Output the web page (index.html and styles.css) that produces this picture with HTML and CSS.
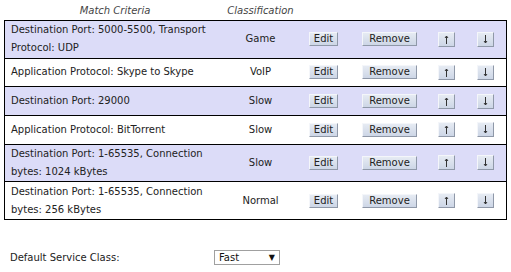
FILE: index.html
```html
<!DOCTYPE html>
<html>
    <head>
        <title>QoS Rules</title>
        <link rel="stylesheet" href="styles.css">
    </head>
    <body>
        <!-- Classification rules -->
        <table class="rules">
            <colgroup>
                <col class="colCriteria">
                <col class="colClass">
                <col class="colEdit">
                <col class="colRemove">
                <col class="colUp">
                <col class="colDown">
            </colgroup>
            <thead>
                <tr>
                    <th>Match Criteria</th>
                    <th>Classification</th>
                    <th></th><th></th><th></th><th></th>
                </tr>
            </thead>
            <tbody>
                <tr class="shaded twoLine">
                    <td class="criteria">Destination Port: 5000-5500, Transport Protocol: UDP</td>
                    <td class="cls">Game</td>
                    <td><button class="btn btnEdit">Edit</button></td>
                    <td><button class="btn btnRemove">Remove</button></td>
                    <td><button class="btn btnArrow"><svg width="5" height="9" viewBox="0 0 5 9"><path d="M2.5 1V9M1 3L2.5 1L4 3" /></svg></button></td>
                    <td><button class="btn btnArrow"><svg width="5" height="9" viewBox="0 0 5 9"><path d="M2.5 0V8M1 6L2.5 8L4 6" /></svg></button></td>
                </tr>
                <tr>
                    <td class="criteria">Application Protocol: Skype to Skype</td>
                    <td class="cls">VoIP</td>
                    <td><button class="btn btnEdit">Edit</button></td>
                    <td><button class="btn btnRemove">Remove</button></td>
                    <td><button class="btn btnArrow"><svg width="5" height="9" viewBox="0 0 5 9"><path d="M2.5 1V9M1 3L2.5 1L4 3" /></svg></button></td>
                    <td><button class="btn btnArrow"><svg width="5" height="9" viewBox="0 0 5 9"><path d="M2.5 0V8M1 6L2.5 8L4 6" /></svg></button></td>
                </tr>
                <tr class="shaded">
                    <td class="criteria">Destination Port: 29000</td>
                    <td class="cls">Slow</td>
                    <td><button class="btn btnEdit">Edit</button></td>
                    <td><button class="btn btnRemove">Remove</button></td>
                    <td><button class="btn btnArrow"><svg width="5" height="9" viewBox="0 0 5 9"><path d="M2.5 1V9M1 3L2.5 1L4 3" /></svg></button></td>
                    <td><button class="btn btnArrow"><svg width="5" height="9" viewBox="0 0 5 9"><path d="M2.5 0V8M1 6L2.5 8L4 6" /></svg></button></td>
                </tr>
                <tr>
                    <td class="criteria">Application Protocol: BitTorrent</td>
                    <td class="cls">Slow</td>
                    <td><button class="btn btnEdit">Edit</button></td>
                    <td><button class="btn btnRemove">Remove</button></td>
                    <td><button class="btn btnArrow"><svg width="5" height="9" viewBox="0 0 5 9"><path d="M2.5 1V9M1 3L2.5 1L4 3" /></svg></button></td>
                    <td><button class="btn btnArrow"><svg width="5" height="9" viewBox="0 0 5 9"><path d="M2.5 0V8M1 6L2.5 8L4 6" /></svg></button></td>
                </tr>
                <tr class="shaded twoLine">
                    <td class="criteria">Destination Port: 1-65535, Connection bytes: 1024 kBytes</td>
                    <td class="cls">Slow</td>
                    <td><button class="btn btnEdit">Edit</button></td>
                    <td><button class="btn btnRemove">Remove</button></td>
                    <td><button class="btn btnArrow"><svg width="5" height="9" viewBox="0 0 5 9"><path d="M2.5 1V9M1 3L2.5 1L4 3" /></svg></button></td>
                    <td><button class="btn btnArrow"><svg width="5" height="9" viewBox="0 0 5 9"><path d="M2.5 0V8M1 6L2.5 8L4 6" /></svg></button></td>
                </tr>
                <tr class="twoLine">
                    <td class="criteria">Destination Port: 1-65535, Connection bytes: 256 kBytes</td>
                    <td class="cls">Normal</td>
                    <td><button class="btn btnEdit">Edit</button></td>
                    <td><button class="btn btnRemove">Remove</button></td>
                    <td><button class="btn btnArrow"><svg width="5" height="9" viewBox="0 0 5 9"><path d="M2.5 1V9M1 3L2.5 1L4 3" /></svg></button></td>
                    <td><button class="btn btnArrow"><svg width="5" height="9" viewBox="0 0 5 9"><path d="M2.5 0V8M1 6L2.5 8L4 6" /></svg></button></td>
                </tr>
            </tbody>
        </table>

        <!-- Default class -->
        <div class="defaultRow">
            <span class="defaultLabel">Default Service Class:</span>
            <div class="selectBox">
                <span>Fast</span>
                <span class="selectArrow">&#9660;</span>
            </div>
        </div>
    </body>
</html>
```

FILE: styles.css
```css
body {
    margin: 0;
    padding: 0 4px;
    background-color: #fff;
    font-family: "DejaVu Sans", Verdana, sans-serif;
    font-size: 10px;
    color: #222;
}
.rules {
    width: 502px;
    table-layout: fixed;
    border-collapse: collapse;
}
.colCriteria { width: 221px; }
.colClass { width: 70px; }
.colEdit { width: 56px; }
.colRemove { width: 76px; }
.colUp { width: 38px; }
.colDown { width: 41px; }
thead th {
    font-weight: normal;
    font-style: italic;
    color: #444;
    height: 20px;
    padding: 0;
    text-align: center;
    vertical-align: middle;
}
tbody tr {
    border: 1px solid #000;
}
tbody tr.shaded {
    background-color: #dcdcf8;
}
tbody td {
    padding: 0;
    height: 27.7px;
    line-height: 14px;
    text-align: center;
    vertical-align: middle;
}
tbody tr.twoLine td {
    height: 36.6px;
}
td.criteria {
    text-align: left;
    padding: 0 6px;
    line-height: 18px;
}
.btn {
    font-family: "DejaVu Sans", Verdana, sans-serif;
    font-size: 10px;
    color: #222;
    height: 14px;
    padding: 0;
    margin: 0;
    line-height: 12px;
    vertical-align: middle;
    background: linear-gradient(#e6ebf3, #cdd6e6);
    border: 1px solid;
    border-color: #f4f6fa #8f98a8 #8f98a8 #f4f6fa;
    cursor: pointer;
}
.btnEdit { width: 29px; }
.btnRemove { width: 55px; }
.btnArrow {
    width: 17px;
    height: 15px;
}
.btnArrow svg {
    display: block;
    margin: 0 auto;
    fill: none;
    stroke: #333;
    stroke-width: 1;
}
.defaultRow {
    display: flex;
    align-items: center;
    margin-top: 30px;
    padding-left: 6px;
}
.defaultLabel {
    width: 204px;
}
.selectBox {
    display: flex;
    justify-content: space-between;
    align-items: center;
    width: 56px;
    height: 13px;
    padding: 0 4px;
    border: 1px solid #a0a0a0;
    color: #111;
}
.selectArrow {
    font-size: 8px;
}
```
